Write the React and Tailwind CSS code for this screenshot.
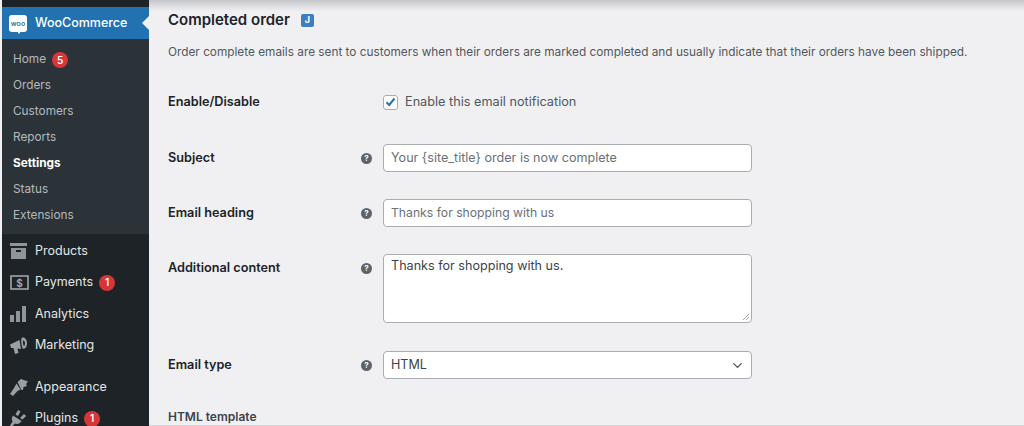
import React from 'react';
import { ChevronDown } from 'lucide-react';

const FONT = "font-['Inter','Liberation_Sans',sans-serif]";

const subItems = ['Home', 'Orders', 'Customers', 'Reports', 'Settings', 'Status', 'Extensions'];

function Badge({ n }) {
  return (
    <span className="ml-[6px] w-[16px] h-[16px] rounded-full bg-[#d63638] text-white text-[10px] font-semibold flex items-center justify-center">
      {n}
    </span>
  );
}

function ProductsIcon() {
  return (
    <svg width="17" height="16" viewBox="0 0 17 16" fill="#8f959b">
      <rect x="0" y="0" width="17" height="3" />
      <path d="M1 5h15v11H1z M6 7v2h5V7z" fillRule="evenodd" />
    </svg>
  );
}

function PaymentsIcon() {
  return (
    <svg width="19" height="15" viewBox="0 0 19 15">
      <rect x="1" y="1" width="17" height="13" fill="none" stroke="#a0a5aa" strokeWidth="1.6" />
      <text x="9.5" y="11.5" textAnchor="middle" fontSize="10" fontWeight="700" fill="#a0a5aa" fontFamily="Inter, sans-serif">$</text>
    </svg>
  );
}

function AnalyticsIcon() {
  return (
    <svg width="16" height="16" viewBox="0 0 16 16" fill="#8f959b">
      <rect x="0" y="9" width="4" height="7" />
      <rect x="6" y="5" width="4" height="11" />
      <rect x="12" y="0" width="4" height="16" />
    </svg>
  );
}

function MarketingIcon() {
  return (
    <svg width="17" height="17" viewBox="0 0 17 17" fill="#9a9fa4">
      <path d="M0 7.5 L9.5 3 L11 12 L7.5 11.5 L8.5 16 L5 17 L3.5 11 L1 11 Z" />
      <path d="M11.5 1 C14.5 -0.5 16.8 2.5 17 6 C17.2 9.5 15 12.5 12.5 11.5 C11.3 8 10.8 4.5 11.5 1 Z M13 3.5 C12.7 5.5 13 7.5 13.8 9 C15.5 8.5 15.5 3.5 13 3.5 Z" fillRule="evenodd" />
    </svg>
  );
}

function AppearanceIcon() {
  return (
    <svg width="18" height="17" viewBox="0 0 18 17" fill="#9a9fa4">
      <path d="M7.5 3 L11 0 L18 2.5 L16 5 L17 7 L13.5 8 L13 11 L11.5 11 Z" />
      <path d="M6.5 4.5 L10.5 10.5 L7.5 12 L3 17 L0 15 L4 9 Z" />
    </svg>
  );
}

function PluginsIcon() {
  return (
    <svg width="16" height="17" viewBox="0 0 16 17" fill="#9a9fa4">
      <path d="M3 5.5 L11.5 11 C10 14 7 14.5 5 13.5 L1.5 17 L0 15.5 L2.5 11.5 C1.5 9.5 1.5 7.5 3 5.5 Z" />
      <path d="M5.5 4.5 L8 0 L10.5 1.5 L8 6 Z M10 8 L14 4 L16 6 L12.5 9.5 Z" />
    </svg>
  );
}

function WooLogo() {
  return (
    <span className="relative w-[18px] h-[17px] bg-white rounded-[3px] flex items-center justify-center text-[7px] font-semibold text-[#3a6f9e] leading-none">
      woo
      <span className="absolute -bottom-[2px] left-[8px] w-0 h-0 border-l-[2px] border-r-[2px] border-t-[3px] border-l-transparent border-r-transparent border-t-white" />
    </span>
  );
}

const menuOne = [
  { label: 'Products', icon: <ProductsIcon /> },
  { label: 'Payments', icon: <PaymentsIcon />, badge: 1 },
  { label: 'Analytics', icon: <AnalyticsIcon /> },
  { label: 'Marketing', icon: <MarketingIcon /> },
];

const menuTwo = [
  { label: 'Appearance', icon: <AppearanceIcon /> },
  { label: 'Plugins', icon: <PluginsIcon />, badge: 1 },
];

function MenuItem({ item }) {
  return (
    <div className="flex items-center h-[31.5px] text-[12.5px] text-[#e4e6e8]">
      <span className="w-[33px] pl-[8px] flex justify-start">{item.icon}</span>
      <span>{item.label}</span>
      {item.badge && <Badge n={item.badge} />}
    </div>
  );
}

function Sidebar() {
  return (
    <aside className="w-[147px] ml-[2px] shrink-0 bg-[#1d2327] pt-[7px] overflow-hidden">
      <div className="relative h-[32px] bg-[#2271b1] flex items-center pl-[7px] gap-[8px] text-[12.5px] font-medium text-white">
        <WooLogo />
        WooCommerce
        <span className="absolute right-0 top-[9px] w-0 h-0 border-y-[7px] border-r-[7px] border-y-transparent border-r-[#f0f0f3]" />
      </div>
      <div className="bg-[#2c3338] pt-[8px] pb-[5px] text-[11.8px] text-[#b4b9be]">
        {subItems.map((s) => (
          <div key={s} className={`h-[26px] pl-[11px] flex items-center ${s === 'Settings' ? 'font-bold text-white' : ''}`}>
            {s}
            {s === 'Home' && <Badge n={5} />}
          </div>
        ))}
      </div>
      <div className="pt-[1.5px]">
        {menuOne.map((m) => <MenuItem key={m.label} item={m} />)}
      </div>
      <div className="pt-[10px]">
        {menuTwo.map((m) => <MenuItem key={m.label} item={m} />)}
      </div>
    </aside>
  );
}

function Help() {
  return (
    <span className="w-[11px] h-[11px] rounded-full bg-[#5f6367] text-white text-[8px] font-bold flex items-center justify-center">?</span>
  );
}

function Row({ label, help, className, children }) {
  return (
    <div className={`flex items-start ${className}`}>
      <span className="w-[193px] h-[28px] flex items-center font-semibold text-[#1d2327] text-[12.7px]">{label}</span>
      <span className="w-[22px] h-[28px] flex items-center">{help && <Help />}</span>
      {children}
    </div>
  );
}

const fieldCls = 'w-[369px] bg-white border border-[#a9adb2] rounded-[4px] px-[7px] text-[12.6px] text-[#3c434a] flex';

export default function App() {
  return (
    <div className={`w-[1024px] h-[426px] overflow-hidden flex bg-[#f0f0f3] ${FONT}`}>
      <Sidebar />
      <main className="relative flex-1 pl-[19px] pt-[11px] border-b border-[#d5d6d8]">
        <div className="absolute left-0 right-0 top-0 h-[11px] bg-gradient-to-b from-[#c4c5c8] to-[#f0f0f3]" />
        <div className="relative flex items-center h-[18px] gap-[11px]">
          <h1 className="text-[15px] font-semibold text-[#1d2327]">Completed order</h1>
          <span className="w-[13px] h-[13px] rounded-[2px] bg-[#3b7fc0] text-white text-[9px] font-bold flex items-center justify-center">J</span>
        </div>
        <p className="mt-[16px] h-[16px] flex items-center text-[11.8px] text-[#50575e] whitespace-nowrap">
          Order complete emails are sent to customers when their orders are marked completed and usually indicate that their orders have been shipped.
        </p>
        <div className="mt-[32px] flex items-center h-[18px] text-[12.7px]">
          <span className="w-[215px] font-semibold text-[#1d2327]">Enable/Disable</span>
          <span className="w-[15px] h-[15px] bg-white border border-[#a9adb2] rounded-[3px] flex items-center justify-center">
            <svg width="11" height="10" viewBox="0 0 11 10"><path d="M1.5 5.2 L4.2 8 L9.5 1.5" fill="none" stroke="#2271b1" strokeWidth="2" /></svg>
          </span>
          <span className="ml-[7px] text-[#50575e]">Enable this email notification</span>
        </div>
        <Row label="Subject" help className="mt-[33px]">
          <div className={`${fieldCls} h-[28px] items-center text-[#6b7177]`}>{'Your {site_title} order is now complete'}</div>
        </Row>
        <Row label="Email heading" help className="mt-[27px]">
          <div className={`${fieldCls} h-[28px] items-center !text-[12.2px] text-[#6b7177]`}>Thanks for shopping with us</div>
        </Row>
        <Row label="Additional content" help className="mt-[27px]">
          <div className={`${fieldCls} relative h-[69px] pt-[2px]`}>
            Thanks for shopping with us.
            <svg className="absolute right-[1px] bottom-[1px]" width="8" height="8" viewBox="0 0 8 8">
              <path d="M1 7 L7 1 M4 7 L7 4" stroke="#8a8f94" strokeWidth="0.8" />
            </svg>
          </div>
        </Row>
        <Row label="Email type" help className="mt-[28px]">
          <div className={`${fieldCls} h-[28px] items-center justify-between`}>
            HTML
            <ChevronDown size={15} strokeWidth={2.2} className="text-[#50575e] -mr-[1px]" />
          </div>
        </Row>
        <div className="mt-[29px] font-semibold text-[12px] text-[#3c434a]">HTML template</div>
      </main>
    </div>
  );
}
